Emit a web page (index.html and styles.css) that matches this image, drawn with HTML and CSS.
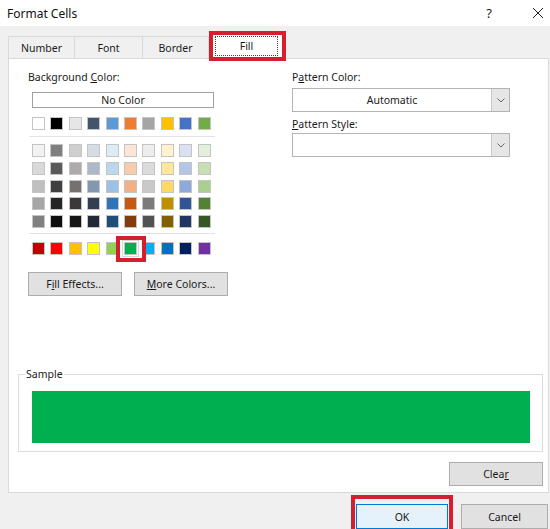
FILE: index.html
```html
<!DOCTYPE html>
<html>
<head>
<meta charset="utf-8">
<link rel="stylesheet" href="styles.css">
</head>
<body>
<div class="window">
  <div class="titlebar">
    <span class="title">Format Cells</span>
    <span class="help">?</span>
    <svg class="close" width="12" height="12" viewBox="0 0 12 12"><path d="M1 1 L11 11 M11 1 L1 11" stroke="#222" stroke-width="1"/></svg>
  </div>
  <div class="body">
    <div class="tabs">
      <div class="tab t-number">Number</div>
      <div class="tab t-font">Font</div>
      <div class="tab t-border">Border</div>
      <div class="tab tab-active"><span class="focus">Fill</span></div>
    </div>
    <div class="panel">
      <div class="top">
        <div class="left">
          <div class="label">Background <u>C</u>olor:</div>
          <div class="nocolor">No Color</div>
          <div class="row r1">
            <i style="background:#ffffff"></i><i style="background:#000000"></i><i style="background:#e7e6e6"></i><i style="background:#44546a"></i><i style="background:#5b9bd5"></i><i style="background:#ed7d31"></i><i style="background:#a5a5a5"></i><i style="background:#ffc000"></i><i style="background:#4472c4"></i><i style="background:#70ad47"></i>
          </div>
          <div class="sep s1"></div>
          <div class="tints">
            <div class="row">
              <i style="background:#f2f2f2"></i><i style="background:#7f7f7f"></i><i style="background:#d0cece"></i><i style="background:#d6dce4"></i><i style="background:#ddebf7"></i><i style="background:#fce4d6"></i><i style="background:#ededed"></i><i style="background:#fff2cc"></i><i style="background:#d9e1f2"></i><i style="background:#e2efda"></i>
            </div>
            <div class="row">
              <i style="background:#d9d9d9"></i><i style="background:#595959"></i><i style="background:#aeaaaa"></i><i style="background:#acb9ca"></i><i style="background:#bdd7ee"></i><i style="background:#f8cbad"></i><i style="background:#dbdbdb"></i><i style="background:#ffe699"></i><i style="background:#b4c6e7"></i><i style="background:#c6e0b4"></i>
            </div>
            <div class="row">
              <i style="background:#bfbfbf"></i><i style="background:#404040"></i><i style="background:#757171"></i><i style="background:#8497b0"></i><i style="background:#9bc2e6"></i><i style="background:#f4b084"></i><i style="background:#c9c9c9"></i><i style="background:#ffd966"></i><i style="background:#8ea9db"></i><i style="background:#a9d08e"></i>
            </div>
            <div class="row">
              <i style="background:#a6a6a6"></i><i style="background:#262626"></i><i style="background:#3a3838"></i><i style="background:#333f4f"></i><i style="background:#2f75b5"></i><i style="background:#c65911"></i><i style="background:#7b7b7b"></i><i style="background:#bf8f00"></i><i style="background:#305496"></i><i style="background:#548235"></i>
            </div>
            <div class="row">
              <i style="background:#808080"></i><i style="background:#0d0d0d"></i><i style="background:#161616"></i><i style="background:#222b35"></i><i style="background:#1f4e78"></i><i style="background:#833c0c"></i><i style="background:#525252"></i><i style="background:#806000"></i><i style="background:#203764"></i><i style="background:#375623"></i>
            </div>
          </div>
          <div class="sep s2"></div>
          <div class="row r7">
            <i style="background:#c00000"></i><i style="background:#ff0000"></i><i style="background:#ffc000"></i><i style="background:#ffff00"></i><i style="background:#92d050"></i><i class="picked" style="background:#00b050"></i><i style="background:#00b0f0"></i><i style="background:#0070c0"></i><i style="background:#002060"></i><i style="background:#7030a0"></i>
          </div>
          <div class="btnrow">
            <div class="btn">F<u>i</u>ll Effects...</div>
            <div class="btn"><u>M</u>ore Colors...</div>
          </div>
        </div>
        <div class="right">
          <div class="label">P<u>a</u>ttern Color:</div>
          <div class="combo"><span class="combo-text">Automatic</span><span class="combo-arrow"><svg width="8" height="5" viewBox="0 0 8 5"><path d="M0.5 0.5 L4 4 L7.5 0.5" fill="none" stroke="#666" stroke-width="1"/></svg></span></div>
          <div class="label l2"><u>P</u>attern Style:</div>
          <div class="combo c2"><span class="combo-text"></span><span class="combo-arrow"><svg width="8" height="5" viewBox="0 0 8 5"><path d="M0.5 0.5 L4 4 L7.5 0.5" fill="none" stroke="#666" stroke-width="1"/></svg></span></div>
        </div>
      </div>
      <div class="sample">
        <div class="legend">Sample</div>
        <div class="swatch"></div>
      </div>
      <div class="clearrow">
        <div class="btn clear">Clea<u>r</u></div>
      </div>
    </div>
    <div class="footer">
      <div class="btn ok">OK</div>
      <div class="btn cancel">Cancel</div>
    </div>
  </div>
</div>
</body>
</html>
```

FILE: styles.css
```css
html, body {
  margin: 0;
  padding: 0;
}
body {
  width: 550px;
  height: 529px;
  overflow: hidden;
  font-family: "Noto Sans", "Open Sans", sans-serif;
  font-size: 10.5px;
  color: #1a1a1a;
  background: #f0f0f0;
}
u { text-decoration: underline; text-underline-offset: 1px; }

.window {
  width: 550px;
  height: 529px;
  display: flex;
  flex-direction: column;
}

.titlebar {
  height: 28px;
  background: #ffffff;
  display: flex;
  align-items: center;
  box-sizing: border-box;
  padding-left: 7px;
}
.title {
  font-size: 12px;
  color: #111;
  flex: 1;
}
.help {
  font-size: 13px;
  color: #222;
  margin-right: 40px;
}
.close {
  margin-right: 6px;
}

.body {
  flex: 1;
  display: flex;
  flex-direction: column;
}

.tabs {
  height: 32px;
  display: flex;
  align-items: flex-end;
  padding-left: 8px;
}
.tab {
  height: 22px;
  box-sizing: border-box;
  border: 1px solid #d9d9d9;
  border-bottom: none;
  display: flex;
  align-items: center;
  justify-content: center;
  background: #f0f0f0;
  margin-right: -1px;
  padding-top: 1px;
}
.t-number { width: 67px; }
.t-font { width: 69px; }
.t-border { width: 67px; }
.tab-active {
  position: relative;
  width: 72px;
  height: 27px;
  margin-left: 3px;
  background: #ffffff;
  border-color: #d9d9d9;
  padding: 4px 4px 2px 3px;
  align-items: stretch;
}
.tab-active::after {
  content: "";
  position: absolute;
  left: -3px;
  top: -1px;
  right: -4px;
  bottom: -3px;
  border: 4px solid #d2202e;
}
.focus {
  flex: 1;
  border: 1px dotted #444;
  display: flex;
  align-items: center;
  justify-content: center;
}

.panel {
  height: 435px;
  margin-left: 8px;
  margin-right: 1px;
  box-sizing: border-box;
  background: #ffffff;
  border: 1px solid #dadada;
  padding-top: 11px;
  display: flex;
  flex-direction: column;
}

.top {
  display: flex;
  padding-left: 19px;
}
.left {
  width: 264px;
  display: flex;
  flex-direction: column;
}
.right {
  width: 218px;
  display: flex;
  flex-direction: column;
}
.label {
  height: 14px;
  line-height: 14px;
}
.nocolor {
  margin-top: 8px;
  margin-left: 4px;
  width: 182px;
  height: 16px;
  box-sizing: border-box;
  border: 1px solid #a0a0a0;
  display: flex;
  align-items: center;
  justify-content: center;
  line-height: 14px;
}
.row {
  display: flex;
  gap: 5.4px;
  margin-left: 4px;
}
.row i {
  display: block;
  width: 13px;
  height: 13px;
  box-sizing: border-box;
  border: 1px solid #c4c4c4;
}
.r1 { margin-top: 9px; }
.sep {
  margin-left: 1px;
  width: 186px;
  height: 1px;
  background: #e3e3e3;
}
.s1 { margin-top: 6px; }
.tints {
  margin-top: 7px;
  display: flex;
  flex-direction: column;
  gap: 4.75px;
}
.s2 { margin-top: 5px; }
.r7 { margin-top: 7.5px; }
.picked {
  position: relative;
  outline: 1px solid #d8d8d8;
  outline-offset: 1px;
}
.picked::after {
  content: "";
  position: absolute;
  left: -9px;
  top: -6.5px;
  right: -10px;
  bottom: -8.5px;
  border: 4px solid #d2202e;
}

.btnrow {
  margin-top: 17.5px;
  display: flex;
  gap: 12px;
}
.btn {
  height: 24px;
  box-sizing: border-box;
  background: #e1e1e1;
  border: 1px solid #adadad;
  display: flex;
  align-items: center;
  justify-content: center;
}
.btnrow .btn { width: 94px; }

.combo {
  margin-top: 4px;
  height: 24px;
  box-sizing: border-box;
  border: 1px solid #b4b4b4;
  display: flex;
  background: #fff;
}
.combo-text {
  flex: 1;
  display: flex;
  align-items: center;
  justify-content: center;
}
.combo-arrow {
  width: 17px;
  background: #e6e6e6;
  border-left: 1px solid #c8c8c8;
  display: flex;
  align-items: center;
  justify-content: center;
}
.l2 { margin-top: 5px; }
.c2 { margin-top: 2px; }

.sample {
  margin-top: 78px;
  margin-left: 9px;
  width: 525px;
  box-sizing: border-box;
  border: 1px solid #dcdcdc;
  padding-bottom: 8px;
  display: flex;
  flex-direction: column;
}
.legend {
  align-self: flex-start;
  margin-top: -8px;
  margin-left: 6px;
  background: #fff;
  padding: 0 1px;
  height: 14px;
  line-height: 14px;
}
.swatch {
  margin-top: 10px;
  margin-left: 13px;
  width: 498px;
  height: 52px;
  background: #00b050;
}

.clearrow {
  margin-top: 10px;
  display: flex;
  justify-content: flex-end;
  padding-right: 5px;
}
.clear { width: 94px; }

.footer {
  flex: 1;
  display: flex;
  padding-top: 11px;
  padding-left: 356px;
  gap: 13px;
}
.ok {
  position: relative;
  width: 92px;
  height: 25px;
  background: #e5f1fb;
  border-color: #0078d7;
}
.ok::after {
  content: "";
  position: absolute;
  left: -6px;
  top: -10px;
  right: -6px;
  bottom: -6px;
  border: 4px solid #d2202e;
}
.cancel {
  width: 87px;
  height: 25px;
}
```
